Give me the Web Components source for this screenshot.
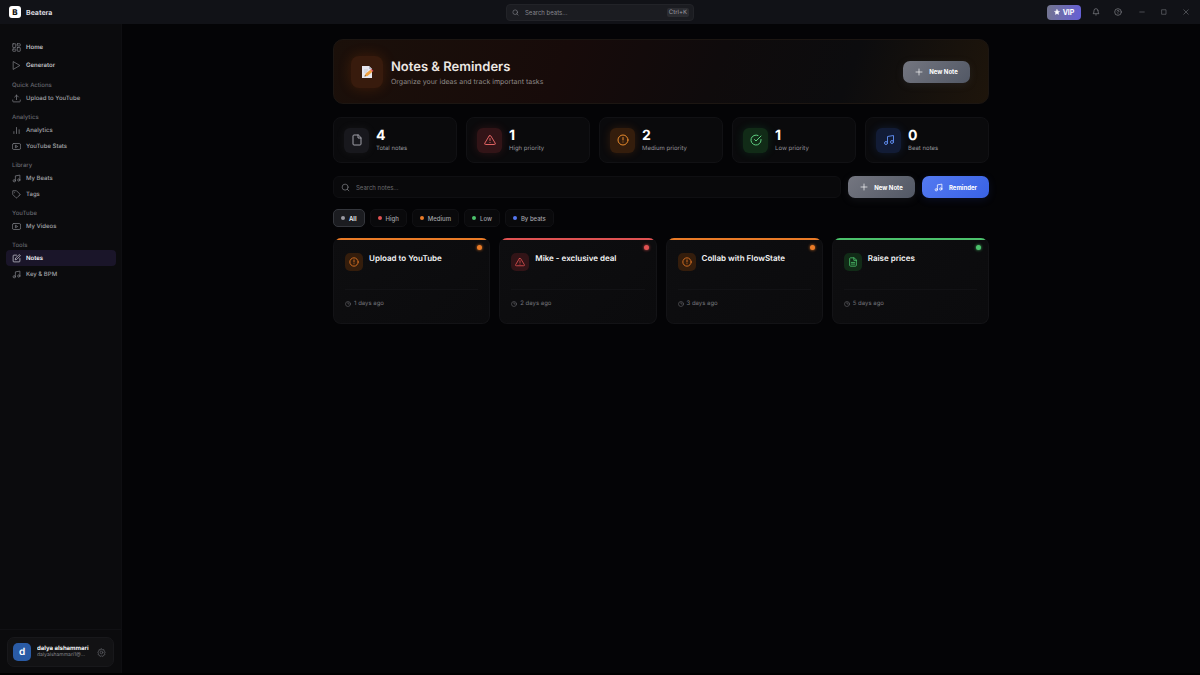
<!DOCTYPE html>
<html lang="en">
<head>
<meta charset="utf-8">
<title>Beatera – Notes &amp; Reminders</title>
<style>
  html, body { margin: 0; background: #000; }
  body { font-family: Inter, "Liberation Sans", sans-serif; color: #f4f4f5; text-rendering: geometricPrecision; }
</style>
</head>
<body>
<bt-app>
  <bt-titlebar slot="top"></bt-titlebar>
  <bt-sidebar slot="side">
    <bt-nav-group>
      <bt-nav-item icon="grid" primary>Home</bt-nav-item>
      <bt-nav-item icon="play" primary>Generator</bt-nav-item>
    </bt-nav-group>
    <bt-nav-group heading="Quick Actions">
      <bt-nav-item icon="upload">Upload to YouTube</bt-nav-item>
    </bt-nav-group>
    <bt-nav-group heading="Analytics">
      <bt-nav-item icon="bars">Analytics</bt-nav-item>
      <bt-nav-item icon="video">YouTube Stats</bt-nav-item>
    </bt-nav-group>
    <bt-nav-group heading="Library">
      <bt-nav-item icon="music">My Beats</bt-nav-item>
      <bt-nav-item icon="tag">Tags</bt-nav-item>
    </bt-nav-group>
    <bt-nav-group heading="YouTube">
      <bt-nav-item icon="video">My Videos</bt-nav-item>
    </bt-nav-group>
    <bt-nav-group heading="Tools">
      <bt-nav-item icon="edit" active>Notes</bt-nav-item>
      <bt-nav-item icon="music">Key &amp; BPM</bt-nav-item>
    </bt-nav-group>
    <bt-user slot="footer" initial="d">
      <span slot="name">dalya alshammari</span>
      <span slot="email">dalyalshammari1@...</span>
    </bt-user>
  </bt-sidebar>
  <bt-hero>
    <span slot="title">Notes &amp; Reminders</span>
    <span slot="subtitle">Organize your ideas and track important tasks</span>
    <bt-button slot="action" icon="plus">New Note</bt-button>
  </bt-hero>
  <bt-stats>
    <bt-stat icon="file" tone="gray" value="4">Total notes</bt-stat>
    <bt-stat icon="warning" tone="red" value="1">High priority</bt-stat>
    <bt-stat icon="alert" tone="orange" value="2">Medium priority</bt-stat>
    <bt-stat icon="check" tone="green" value="1">Low priority</bt-stat>
    <bt-stat icon="music" tone="blue" value="0">Beat notes</bt-stat>
  </bt-stats>
  <bt-toolbar>
    <bt-button icon="plus">New Note</bt-button>
    <bt-button icon="music" variant="blue">Reminder</bt-button>
  </bt-toolbar>
  <bt-filters>
    <bt-filter tone="gray" active>All</bt-filter>
    <bt-filter tone="red">High</bt-filter>
    <bt-filter tone="orange">Medium</bt-filter>
    <bt-filter tone="green">Low</bt-filter>
    <bt-filter tone="blue">By beats</bt-filter>
  </bt-filters>
  <bt-notes>
    <bt-note icon="alert" tone="orange" when="1 days ago">Upload to YouTube</bt-note>
    <bt-note icon="warning" tone="red" when="2 days ago">Mike - exclusive deal</bt-note>
    <bt-note icon="alert" tone="orange" when="3 days ago">Collab with FlowState</bt-note>
    <bt-note icon="filetext" tone="green" when="5 days ago">Raise prices</bt-note>
  </bt-notes>
</bt-app>

<script>
const ICONS = {
  grid: '<rect x="2" y="2" width="8" height="10" rx="1"/><rect x="14" y="2" width="8" height="6" rx="1"/><rect x="14" y="12" width="8" height="10" rx="1"/><rect x="2" y="16" width="8" height="6" rx="1"/>',
  play: '<path d="M4 2l17 10-17 10z"/>',
  upload: '<path d="M2 16v3a2 2 0 0 0 2 2h16a2 2 0 0 0 2-2v-3M12 15V3M7 8l5-5 5 5"/>',
  bars: '<path d="M5 20v-5M12 20V4M19 20V10"/>',
  video: '<rect x="1" y="4" width="22" height="16" rx="4"/><path d="M10 9l5 3-5 3z"/>',
  music: '<path d="M9 18V5l12-2v13"/><circle cx="6" cy="18" r="3"/><circle cx="18" cy="16" r="3"/>',
  tag: '<path d="M20.6 13.4l-7.2 7.2a2 2 0 0 1-2.8 0L2 12V2h10l8.6 8.6a2 2 0 0 1 0 2.8z"/><path d="M7 7h.01"/>',
  edit: '<path d="M12 3H5a2 2 0 0 0-2 2v14a2 2 0 0 0 2 2h14a2 2 0 0 0 2-2v-7"/><path d="M18.4 2.6a2.1 2.1 0 0 1 3 3L12.5 14.5l-4 1 1-4z"/>',
  search: '<circle cx="11" cy="11" r="8"/><path d="M21 21l-4.3-4.3"/>',
  bell: '<path d="M18 8A6 6 0 0 0 6 8c0 7-3 9-3 9h18s-3-2-3-9M13.7 21a2 2 0 0 1-3.4 0"/>',
  help: '<circle cx="12" cy="12" r="10"/><path d="M9.1 9a3 3 0 0 1 5.8 1c0 2-3 3-3 3M12 17h.01"/>',
  minus: '<path d="M3 12h18"/>',
  square: '<rect x="4" y="3" width="16" height="18"/>',
  close: '<path d="M3 3l18 18M21 3L3 21"/>',
  star: '<path fill="currentColor" d="M12 2l3 6.5 7 1-5 5 1.2 7L12 18l-6.2 3.5L7 14.5l-5-5 7-1z"/>',
  plus: '<path d="M12 3v18M3 12h18"/>',
  file: '<path d="M14 2H6a2 2 0 0 0-2 2v16a2 2 0 0 0 2 2h12a2 2 0 0 0 2-2V8z"/><path d="M14 2v6h6"/>',
  filetext: '<path d="M14 2H6a2 2 0 0 0-2 2v16a2 2 0 0 0 2 2h12a2 2 0 0 0 2-2V8z"/><path d="M14 2v6h6M8 13h8M8 17h8"/>',
  warning: '<path d="M10.3 3.9L1.8 18a2 2 0 0 0 1.7 3h17a2 2 0 0 0 1.7-3L13.7 3.9a2 2 0 0 0-3.4 0z"/><path d="M12 9v4M12 17h.01"/>',
  alert: '<circle cx="12" cy="12" r="10"/><path d="M12 7v5M12 16h.01"/>',
  check: '<path d="M22 11v1a10 10 0 1 1-5.9-9.1"/><path d="M22 4L12 14l-3-3"/>',
  clock: '<circle cx="12" cy="12" r="10"/><path d="M12 6v6h4"/>',
  gear: '<circle cx="12" cy="12" r="3.5"/><path d="M12 2l2.5 3 3.900-.6.600 3.900 3 2.200-1.800 3.500 1 3.700-3.700 1.300-1.700 3.500L12 21l-3.800 1.500-1.700-3.500-3.700-1.300 1-3.700L2 10.500l3-2.200.6-3.900 3.900.6z"/>'
};

const TONES = `
  :host { --tone: #a1a1aa; --soft: #18181d; --glow: #a1a1aa14; --dot: #9a9aa2; }
  :host([tone="red"]) { --tone: #e06363; --soft: #321417; --glow: #ef444428; --dot: #e05252; }
  :host([tone="orange"]) { --tone: #e98b2c; --soft: #341d0c; --glow: #f9731628; --dot: #ea7b27; }
  :host([tone="green"]) { --tone: #5fce80; --soft: #112b17; --glow: #22c55e28; --dot: #4cc26c; }
  :host([tone="blue"]) { --tone: #5b87e6; --soft: #121c36; --glow: #3b82f628; --dot: #5577f0; }
`;

const RESET = `
  * { box-sizing: border-box; }
  button, input, kbd { font: inherit; color: inherit; margin: 0; }
  button { border: 0; background: none; padding: 0; cursor: pointer; }
  h1, h2, h3, p { margin: 0; font: inherit; }
`;

function define(name, render) {
  customElements.define(name, class extends HTMLElement {
    connectedCallback() {
      if (this.shadowRoot) return;
      const attr = (key) => this.getAttribute(key) || '';
      this.attachShadow({ mode: 'open' }).innerHTML = render(attr, this);
    }
  });
}

define('bt-icon', (a) => `
  <style>
    :host { display: inline-flex; flex: none; width: var(--size, 9px); height: var(--size, 9px); }
    svg { width: 100%; height: 100%; fill: none; stroke: currentColor; stroke-width: 2; stroke-linecap: round; stroke-linejoin: round; }
  </style>
  <svg viewBox="0 0 24 24" aria-hidden="true">${ICONS[a('name')]}</svg>`);

define('bt-app', () => `
  <style>${RESET}
    :host { display: grid; grid-template: auto 1fr / 122px minmax(0, 1fr); min-height: 100vh; padding-bottom: 2px; box-sizing: border-box; }
    .top { grid-column: 1 / -1; }
    .side { display: grid; grid-template-columns: minmax(0, 1fr); }
    main { background: #040406; padding: 15px 16px; min-width: 0; }
    .content { max-width: 656px; margin: 0 auto; display: flex; flex-direction: column; }
  </style>
  <div class="top"><slot name="top"></slot></div>
  <div class="side"><slot name="side"></slot></div>
  <main><div class="content"><slot></slot></div></main>`);

define('bt-titlebar', () => `
  <style>${RESET}
    :host { display: block; background: #111217; }
    header { display: grid; grid-template-columns: 1fr 188px 1fr; align-items: center; height: 24px; padding: 0 9px; }
    .brand { display: flex; align-items: center; gap: 5px; font-size: 7px; font-weight: 700; color: #dcdce0; }
    .logo { width: 12px; height: 12px; border-radius: 3px; background: #fff; color: #111; display: grid; place-items: center; font-size: 8px; font-weight: 800; }
    .search { display: flex; align-items: center; gap: 6px; height: 17px; padding: 0 4px 0 5px; border: 1px solid #222328; border-radius: 4px; background: #1b1c21; color: #85868d; --size: 7px; }
    input { flex: 1; min-width: 0; border: 0; padding: 0; background: none; outline: none; font-size: 6px; }
    input::placeholder { color: #85868d; opacity: 1; }
    kbd { font-size: 6px; line-height: 9px; padding: 0 2px; border-radius: 2px; background: #2b2c31; color: #9a9ba1; }
    .tools { display: flex; justify-content: flex-end; align-items: center; margin-right: -6px; color: #85868d; --size: 8px; }
    .tools button { width: 22px; height: 16px; display: grid; place-items: center; }
    .tools .win { --size: 6px; }
    .tools .win:nth-child(4) { margin-left: 2px; }
    .tools .vip { display: flex; align-items: center; justify-content: center; gap: 3px; width: 34px; height: 15px; margin-right: 4px; border-radius: 4px; background: linear-gradient(100deg, #73758e, #655fd8); color: #fff; font-size: 7px; font-weight: 700; --size: 6px; }
  </style>
  <header>
    <div class="brand"><span class="logo">B</span><span>Beatera</span></div>
    <label class="search"><bt-icon name="search"></bt-icon><input type="text" placeholder="Search beats..." aria-label="Search beats"><kbd>Ctrl+K</kbd></label>
    <div class="tools">
      <button class="vip"><bt-icon name="star"></bt-icon>VIP</button>
      <button aria-label="Notifications"><bt-icon name="bell"></bt-icon></button>
      <button aria-label="Help"><bt-icon name="help"></bt-icon></button>
      <button class="win" aria-label="Minimize"><bt-icon name="minus"></bt-icon></button>
      <button class="win" aria-label="Maximize"><bt-icon name="square"></bt-icon></button>
      <button class="win" aria-label="Close"><bt-icon name="close"></bt-icon></button>
    </div>
  </header>`);

define('bt-sidebar', () => `
  <style>${RESET}
    :host { display: flex; flex-direction: column; justify-content: space-between; background: #0b0b0d; border-right: 1px solid #0e0e11; }
    nav { padding: 14px 5px 14px 6px; }
    footer { padding: 7px 7px 6px; border-top: 1px solid #111114; }
  </style>
  <nav aria-label="Main"><slot></slot></nav>
  <footer><slot name="footer"></slot></footer>`);

define('bt-nav-group', (a) => `
  <style>${RESET}
    :host { display: block; }
    h2 { padding: 8px 6px 0; font-size: 6px; line-height: 8px; font-weight: 500; color: #66676d; }
  </style>
  ${a('heading') ? `<h2>${a('heading')}</h2>` : ''}<slot></slot>`);

define('bt-nav-item', (a) => `
  <style>${RESET}
    :host { display: block; color: #a2a3a8; }
    a { display: flex; align-items: center; gap: 5px; height: 16px; padding: 0 6px; border-radius: 4px; color: inherit; text-decoration: none; font-size: 6px; font-weight: 500; white-space: nowrap; }
    bt-icon { color: #7c7d83; }
    :host([primary]) { color: #c0c1c5; }
    :host([primary]) a { height: 18px; font-weight: 600; }
    :host([active]) { color: #f4f4f8; }
    :host([active]) a { background: #1a1529; font-weight: 600; }
    :host([active]) bt-icon { color: #c5c5cf; }
  </style>
  <a href="#"><bt-icon name="${a('icon')}"></bt-icon><slot></slot></a>`);

define('bt-user', (a) => `
  <style>${RESET}
    :host { display: flex; align-items: center; gap: 6px; height: 30px; padding: 0 7px 0 5px; box-sizing: border-box; border: 1px solid #18181b; border-radius: 7px; background: #121214; }
    .avatar { flex: none; width: 18px; height: 18px; border-radius: 5px; background: #2a5ba5; display: grid; place-items: center; font-size: 10px; font-weight: 600; color: #fff; }
    .who { flex: 1; min-width: 0; white-space: nowrap; }
    .who p { line-height: 7px; overflow: hidden; }
    .name { font-size: 6px; font-weight: 700; }
    .email { font-size: 5px; color: #85868c; }
    button { display: flex; color: #5c5d63; --size: 9px; }
  </style>
  <span class="avatar">${a('initial')}</span>
  <div class="who"><p class="name"><slot name="name"></slot></p><p class="email"><slot name="email"></slot></p></div>
  <button aria-label="Settings"><bt-icon name="gear"></bt-icon></button>`);

define('bt-button', (a) => `
  <style>${RESET}
    :host { display: block; }
    button { display: flex; align-items: center; justify-content: center; gap: 6px; width: 67px; height: 22px; border-radius: 7px; background: linear-gradient(135deg, #747680, #525865); color: #fff; font-size: 6px; font-weight: 700; white-space: nowrap; --size: 8px; box-shadow: 0 2px 8px #6b728022; }
    :host([variant="blue"]) button { background: linear-gradient(135deg, #547af1, #3962e4); box-shadow: 0 2px 8px #3b62e622; --size: 9px; }
  </style>
  <button><bt-icon name="${a('icon')}"></bt-icon><slot></slot></button>`);

define('bt-hero', () => `
  <style>${RESET}
    :host { display: flex; align-items: center; gap: 8px; height: 65px; padding: 0 18px 0 17px; box-sizing: border-box; border: 1px solid #1c1612; border-radius: 10px;
      background: linear-gradient(110deg, #1b100a 0%, #170b0a 35%, #0f0b0c 58%, #0c0c0e 78%, #1e150b 100%); }
    .emoji { flex: none; width: 32px; height: 32px; border-radius: 8px; background: #381b0d; display: grid; place-items: center; box-shadow: 0 0 14px #ea580c30; }
    .emoji svg { width: 14px; height: 14px; }
    .copy { flex: 1; min-width: 0; padding-top: 3px; }
    h1 { font-size: 13px; line-height: 18px; font-weight: 600; color: #ece7e3; }
    p { font-size: 7px; line-height: 12px; color: #8f8a88; }
  </style>
  <div class="emoji"><svg viewBox="0 0 14 14" aria-hidden="true">
    <path d="M2 1h7l3 3v9H2z" fill="#e6e6ee"/><path d="M9 1v3h3z" fill="#b7b9c6"/>
    <path d="M4 5h4M4 7h3" stroke="#b3b5c4" stroke-width=".6"/>
    <path d="M4.5 11.5l1-2.8 5-4 2 2-5 4.2z" fill="#f0a040"/><path d="M10.5 4.7l1-.8 2 2-1 .8z" fill="#de4d58"/><path d="M4.5 11.5l.5-1.4 1 1z" fill="#443a36"/>
  </svg></div>
  <div class="copy"><h1><slot name="title"></slot></h1><p><slot name="subtitle"></slot></p></div>
  <slot name="action"></slot>`);

define('bt-stats', () => `
  <style>:host { display: grid; grid-template-columns: repeat(auto-fit, minmax(110px, 1fr)); gap: 9px; margin-top: 13px; }</style>
  <slot></slot>`);

define('bt-stat', (a) => `
  <style>${RESET}${TONES}
    :host { display: flex; align-items: center; gap: 7px; height: 46px; padding: 0 10px; box-sizing: border-box; border: 1px solid #111114; border-radius: 8px; background: #0a0a0c; }
    .icon { flex: none; width: 25px; height: 25px; border-radius: 6px; display: grid; place-items: center; background: var(--soft); color: var(--tone); box-shadow: 0 0 10px var(--glow); --size: 12px; }
    .text { padding-top: 2px; }
    .value { font-size: 14px; line-height: 16px; font-weight: 700; color: #fff; }
    .label { font-size: 6px; line-height: 10px; color: #94959b; white-space: nowrap; }
  </style>
  <span class="icon"><bt-icon name="${a('icon')}"></bt-icon></span>
  <div class="text"><p class="value">${a('value')}</p><p class="label"><slot></slot></p></div>`);

define('bt-toolbar', () => `
  <style>${RESET}
    :host { display: flex; gap: 7px; margin-top: 13px; }
    label { flex: 1; min-width: 0; display: flex; align-items: center; gap: 6px; height: 22px; padding: 0 7px; border: 1px solid #0f0f12; border-radius: 6px; background: #09090b; color: #77787d; --size: 9px; }
    input { flex: 1; min-width: 0; border: 0; padding: 0; background: none; outline: none; font-size: 6px; }
    input::placeholder { color: #696a6f; opacity: 1; }
  </style>
  <label><bt-icon name="search"></bt-icon><input type="text" placeholder="Search notes..." aria-label="Search notes"></label>
  <slot></slot>`);

define('bt-filters', () => `
  <style>:host { display: flex; flex-wrap: wrap; gap: 5px; margin-top: 11px; }</style>
  <slot></slot>`);

define('bt-filter', (a, el) => `
  <style>${RESET}${TONES}
    :host { display: block; }
    button { display: flex; align-items: center; gap: 4px; height: 18px; padding: 0 7px; border: 1px solid #101013; border-radius: 5px; background: #09090b; color: #a2a3a8; font-size: 6px; font-weight: 500; }
    i { width: 4px; height: 4px; border-radius: 50%; background: var(--dot); }
    :host([active]) button { background: #1b1c20; border-color: #34363c; color: #f0f0f3; font-weight: 600; }
  </style>
  <button aria-pressed="${el.hasAttribute('active')}"><i></i><slot></slot></button>`);

define('bt-notes', () => `
  <style>:host { display: grid; grid-template-columns: repeat(auto-fill, minmax(150px, 1fr)); gap: 9px; margin-top: 11px; }</style>
  <slot></slot>`);

define('bt-note', (a) => `
  <style>${RESET}${TONES}
    :host { display: block; }
    article { position: relative; height: 86px; overflow: hidden; border: 1px solid #131316; border-top: 0; border-radius: 8px; background: linear-gradient(135deg, #0e0e10, #0b0b0d); }
    .bar { height: 2px; background: var(--dot); }
    .dot { position: absolute; top: 7px; right: 7px; width: 5px; height: 5px; border-radius: 50%; background: var(--dot); box-shadow: 0 0 3px var(--dot); }
    .head { display: flex; gap: 6px; padding: 13px 11px 18px; }
    .icon { flex: none; width: 18px; height: 18px; border-radius: 5px; display: grid; place-items: center; background: var(--soft); color: var(--dot); --size: 10px; }
    h3 { font-size: 8px; line-height: 10px; font-weight: 600; color: #f4f4f5; white-space: nowrap; }
    .when { display: flex; align-items: center; gap: 3px; margin: 0 11px; padding-top: 9px; border-top: 1px solid #121215; font-size: 6px; line-height: 10px; color: #74757a; --size: 6px; }
  </style>
  <article>
    <div class="bar"></div>
    <span class="dot"></span>
    <div class="head"><span class="icon"><bt-icon name="${a('icon')}"></bt-icon></span><h3><slot></slot></h3></div>
    <p class="when"><bt-icon name="clock"></bt-icon>${a('when')}</p>
  </article>`);
</script>
</body>
</html>
